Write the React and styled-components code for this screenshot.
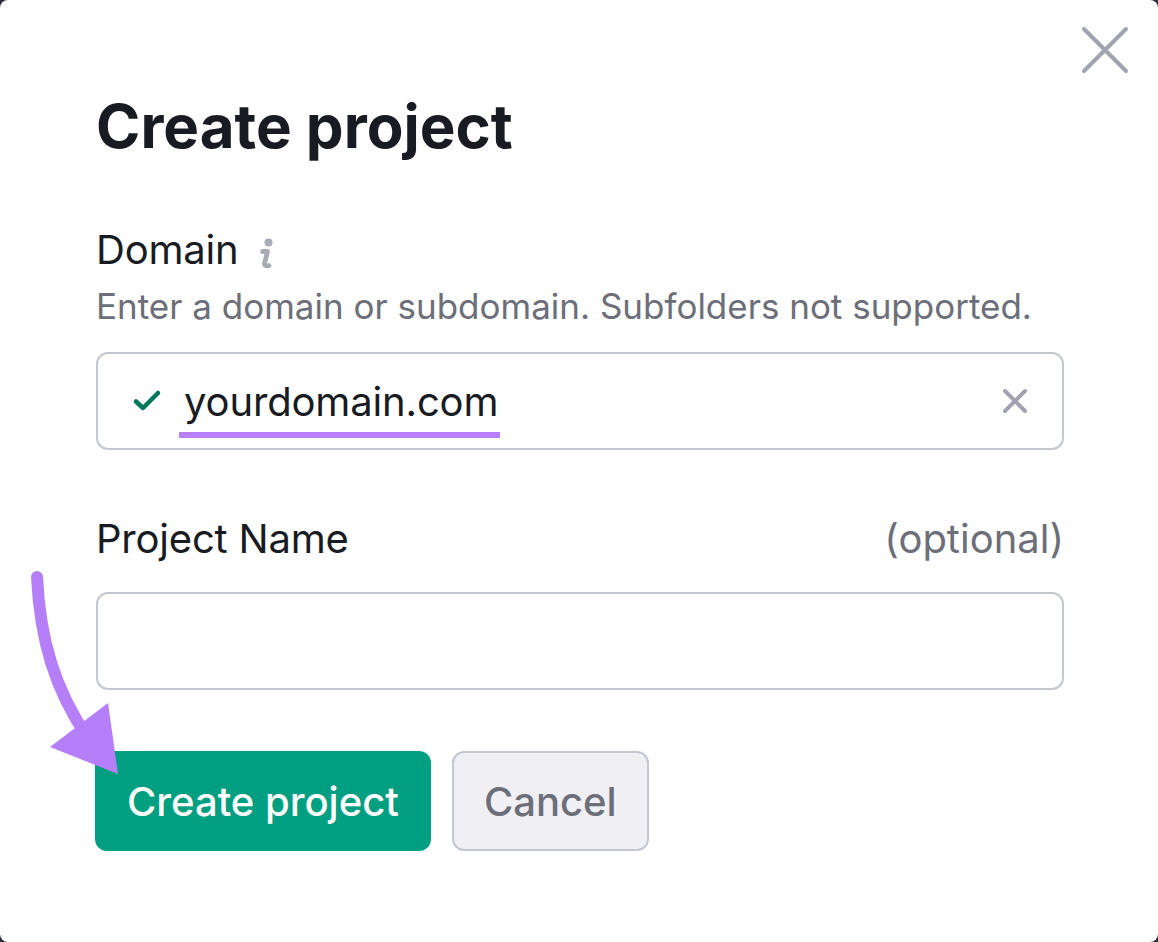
import React from "react";
import styled, { createGlobalStyle } from "styled-components";

const Global = createGlobalStyle`
  html, body { margin: 0; padding: 0; background: #2b2d38; }
  body { font-family: Inter, "Noto Sans", sans-serif; -webkit-font-smoothing: antialiased; }
  * { box-sizing: border-box; }
`;

const Panel = styled.div`
  position: relative;
  width: 1158px;
  height: 942px;
  background: #ffffff;
  border-radius: 8px;
  padding: 90px 94px 0 96px;
  display: flex;
  flex-direction: column;
  overflow: hidden;
`;

const CloseButton = styled.button`
  position: absolute;
  top: 26px;
  right: 29px;
  width: 48px;
  height: 48px;
  padding: 0;
  border: none;
  background: transparent;
  display: flex;
  align-items: center;
  justify-content: center;
`;

const Title = styled.h1`
  margin: 0;
  font-size: 60px;
  line-height: 72px;
  font-weight: 700;
  color: #191b23;
`;

const Field = styled.div`
  display: flex;
  flex-direction: column;
  margin-top: ${(p) => p.$mt}px;
`;

const LabelRow = styled.div`
  display: flex;
  align-items: center;
  justify-content: space-between;
  height: 48px;
  font-size: 40px;
  line-height: 48px;
`;

const LabelMain = styled.div`
  display: flex;
  align-items: center;
  gap: 18px;
  color: #191b23;
  font-weight: 400;
  letter-spacing: -0.2px;
`;

const Optional = styled.span`
  color: #6c6e79;
`;

const InfoIcon = styled.svg`
  width: 20px;
  height: 32px;
  margin-top: 8px;
`;

const Hint = styled.div`
  margin-top: 11px;
  font-size: 35px;
  line-height: 42px;
  color: #6c6e79;
`;

const InputBox = styled.div`
  margin-top: ${(p) => p.$mt}px;
  height: 98px;
  border: 2px solid #c4c7cf;
  border-radius: 12px;
  display: flex;
  align-items: center;
  padding: 0 34px 0 34px;
`;

const Check = styled.svg`
  width: 30px;
  height: 30px;
  flex: none;
`;

const Value = styled.span`
  margin-left: 22px;
  font-size: 40px;
  color: #191b23;
  flex: 1;
  letter-spacing: -0.15px;
`;

const Highlight = styled.span`
  position: relative;
  display: inline-block;
  &::after {
    content: "";
    position: absolute;
    left: -5px;
    right: -2px;
    bottom: -12px;
    height: 6px;
    background: #b980fb;
  }
`;

const Clear = styled.svg`
  width: 26px;
  height: 26px;
  flex: none;
`;

const Actions = styled.div`
  margin-top: 61px;
  display: flex;
  gap: 21px;
`;

const Button = styled.button`
  height: 100px;
  border-radius: 12px;
  font-family: Inter, "Noto Sans", sans-serif;
  font-size: 40px;
  font-weight: 500;
  padding: 0 ${(p) => (p.$primary ? 32 : 30)}px;
  background: ${(p) => (p.$primary ? "#009f81" : "#f0f0f4")};
  color: ${(p) => (p.$primary ? "#ffffff" : "#6c6e79")};
  border: ${(p) => (p.$primary ? "none" : "2px solid #c4c7cf")};
  margin-left: ${(p) => (p.$primary ? -1 : 0)}px;
`;

const ArrowLayer = styled.svg`
  position: absolute;
  left: 0;
  top: 0;
  width: 1158px;
  height: 942px;
  pointer-events: none;
`;

export default function App() {
  return (
    <>
      <Global />
      <Panel>
        <CloseButton aria-label="Close">
          <svg width="48" height="48" viewBox="0 0 48 48">
            <path d="M3 3 L45 45 M45 3 L3 45" stroke="#a1a4af" strokeWidth="4" strokeLinecap="round" />
          </svg>
        </CloseButton>
        <Title>Create project</Title>

        <Field $mt={64}>
          <LabelRow>
            <LabelMain>
              Domain
              <InfoIcon viewBox="0 0 20 32">
                <circle cx="12.5" cy="4.5" r="4" fill="#a9abb6" />
                <path d="M6.5 13.5 L11.5 13.5 L8.6 25 Q7.8 28.6 13 27.6" fill="none" stroke="#a9abb6" strokeWidth="4.8" strokeLinecap="round" strokeLinejoin="round" />
              </InfoIcon>
            </LabelMain>
          </LabelRow>
          <Hint>Enter a domain or subdomain. Subfolders not supported.</Hint>
          <InputBox $mt={25}>
            <Check viewBox="0 0 30 30">
              <path d="M4 15.5 L11 22 L26 7" fill="none" stroke="#00785a" strokeWidth="4.5" strokeLinecap="round" strokeLinejoin="round" />
            </Check>
            <Value>
              <Highlight>yourdomain.com</Highlight>
            </Value>
            <Clear viewBox="0 0 26 26">
              <path d="M3 3 L23 23 M23 3 L3 23" stroke="#a1a4af" strokeWidth="4" strokeLinecap="round" />
            </Clear>
          </InputBox>
        </Field>

        <Field $mt={65}>
          <LabelRow>
            <LabelMain>Project Name</LabelMain>
            <Optional>(optional)</Optional>
          </LabelRow>
          <InputBox $mt={29} />
        </Field>

        <Actions>
          <Button $primary>Create project</Button>
          <Button>Cancel</Button>
        </Actions>

        <ArrowLayer viewBox="0 0 1158 942">
          <path d="M37 577 C 40 640, 55 690, 88 738" fill="none" stroke="#b57ffa" strokeWidth="12" strokeLinecap="round" />
          <polygon points="50,747 108,703 118,774" fill="#b57ffa" />
        </ArrowLayer>
      </Panel>
    </>
  );
}
